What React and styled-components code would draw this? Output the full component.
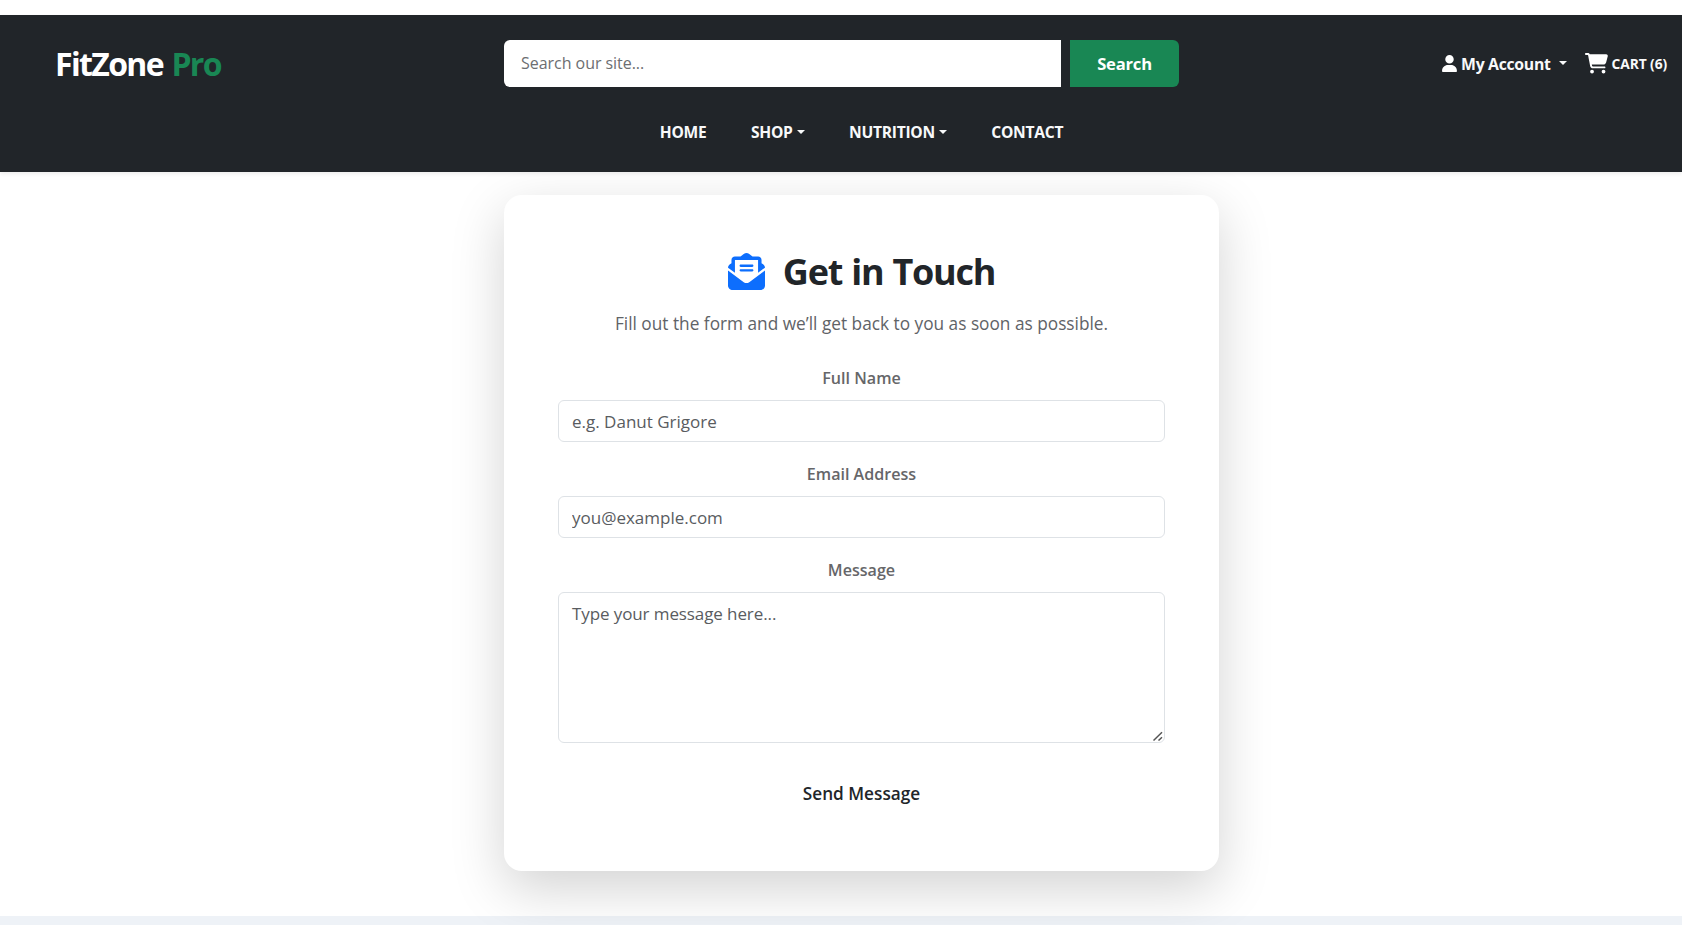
import React from "react";
import styled, { createGlobalStyle } from "styled-components";
import { FaUser, FaCartShopping, FaEnvelopeOpenText } from "react-icons/fa6";

const GlobalStyle = createGlobalStyle`
  *, *::before, *::after { box-sizing: border-box; }
  html { background: #eef2f7; overflow: hidden; }
  body {
    margin: 0;
    height: 925px;
    overflow: hidden;
    font-family: "Segoe UI", "Open Sans", "Noto Sans", sans-serif;
    font-size: 17px;
    color: #212529;
  }
`;

const Page = styled.div`
  display: flex;
  flex-direction: column;
  height: 916px;
  padding-top: 15px;
  background: #fff;
`;

const Header = styled.header`
  position: relative;
  z-index: 1;
  flex: none;
  height: 157px;
  padding-top: 25px;
  background: #212529;
  box-shadow: 0 2px 4px rgba(0, 0, 0, 0.075);
  color: #f8f9fa;
`;

const TopRow = styled.div`
  display: grid;
  grid-template-columns: 504px 675px 1fr;
  grid-template-rows: 47px;
  align-items: center;
`;

const Brand = styled.a`
  padding-left: 55px;
  font-size: 32px;
  line-height: 47px;
  font-weight: 700;
  letter-spacing: -1.65px;
  word-spacing: 1.8px;
  color: #fff;
`;

const BrandAccent = styled.span`
  color: #198754;
`;

const SearchForm = styled.form`
  display: flex;
  gap: 9px;
  height: 47px;
`;

const SearchInput = styled.input`
  flex: 1;
  min-width: 0;
  padding: 0 17px 1px;
  border: 0;
  border-radius: 6px 0 0 6px;
  background: #fff;
  font: inherit;
  font-size: 16px;
  letter-spacing: -0.04px;
  &::placeholder { color: #6c6e71; opacity: 1; }
`;

const SearchButton = styled.button`
  width: 109px;
  padding: 0;
  border: 0;
  border-radius: 0 6px 6px 0;
  background: #198754;
  color: #fff;
  font: inherit;
  font-size: 16.6px;
  font-weight: 700;
  letter-spacing: -0.2px;
`;

const Actions = styled.div`
  display: flex;
  align-items: center;
  justify-content: flex-end;
  gap: 18px;
  padding-right: 15px;
`;

const ActionLink = styled.a`
  display: flex;
  align-items: center;
  font-size: ${(p) => p.$size}px;
  font-weight: 700;
  letter-spacing: ${(p) => p.$spacing || 0}px;
  svg {
    width: ${(p) => p.$iconWidth}px;
    height: ${(p) => p.$iconHeight}px;
    margin-right: 4px;
    color: #fff;
  }
`;

const Caret = styled.span`
  width: 0;
  height: 0;
  margin-left: ${(p) => p.$gap}px;
  margin-bottom: 1px;
  border: 4px solid transparent;
  border-top-color: currentColor;
  border-bottom: 0;
`;

const Nav = styled.nav`
  display: flex;
  justify-content: center;
  gap: 44.5px;
  padding: 33px 0 0 41px;
`;

const NavLink = styled.a`
  display: flex;
  align-items: center;
  font-size: 15.6px;
  line-height: 24px;
  font-weight: 700;
  letter-spacing: -0.28px;
`;

const Main = styled.main`
  display: flex;
  justify-content: center;
  padding: 23px 0 0 41px;
`;

const Card = styled.section`
  display: flex;
  flex-direction: column;
  width: 715px;
  height: 676px;
  padding: 53px 54px;
  border-radius: 18px;
  background: #fff;
  box-shadow: 0 17.6px 52.8px rgba(0, 0, 0, 0.175);
  text-align: center;
`;

const Title = styled.h2`
  display: flex;
  align-items: center;
  justify-content: center;
  gap: 18px;
  margin: 0;
  font-size: 36px;
  line-height: 47px;
  font-weight: 700;
  letter-spacing: -1.25px;
  word-spacing: 1px;
  svg { width: 37px; height: 37px; color: #0d6efd; }
`;

const Intro = styled.p`
  margin: 16px 0 29px;
  font-size: 17.25px;
  line-height: 26px;
  color: #5f6367;
`;

const Field = styled.label`
  display: flex;
  flex-direction: column;
  gap: 10px;
  margin-bottom: ${(p) => p.$after || 20}px;
`;

const FieldName = styled.span`
  font-size: 16.1px;
  line-height: 24px;
  font-weight: 600;
  color: #666669;
`;

const Input = styled.input`
  display: block;
  width: 100%;
  height: 42px;
  padding: 0 13px;
  border: 1px solid #dee2e6;
  border-radius: 6px;
  background: #fff;
  font: inherit;
  &::placeholder { color: #595c5f; opacity: 1; }
`;

const TextArea = styled(Input)`
  height: 151px;
  padding: 8px 13px;
  line-height: 26px;
  letter-spacing: -0.1px;
  resize: none;
`;

const TextAreaFrame = styled.span`
  position: relative;
  display: block;
`;

const Grip = styled.svg`
  position: absolute;
  right: 2px;
  bottom: 2px;
  width: 10px;
  height: 10px;
  stroke: #555;
  stroke-width: 1.5;
`;

const SendButton = styled.button`
  height: 42px;
  border: 0;
  background: transparent;
  color: #212529;
  font: inherit;
  font-size: 17.2px;
  font-weight: 600;
`;

const links = [
  { label: "HOME" },
  { label: "SHOP", menu: true },
  { label: "NUTRITION", menu: true },
  { label: "CONTACT" },
];

export default function App() {
  return (
    <>
      <GlobalStyle />
      <Page>
        <Header>
          <TopRow>
            <Brand>FitZone <BrandAccent>Pro</BrandAccent></Brand>
            <SearchForm>
              <SearchInput placeholder="Search our site..." />
              <SearchButton type="button">Search</SearchButton>
            </SearchForm>
            <Actions>
              <ActionLink $size={15.8} $spacing={-0.3} $iconWidth={15} $iconHeight={17}>
                <FaUser />My Account<Caret $gap={8} />
              </ActionLink>
              <ActionLink $size={13.8} $spacing={-0.1} $iconWidth={23} $iconHeight={20.5}>
                <FaCartShopping />CART (6)
              </ActionLink>
            </Actions>
          </TopRow>
          <Nav>
            {links.map((l) => (
              <NavLink key={l.label}>{l.label}{l.menu && <Caret $gap={4} />}</NavLink>
            ))}
          </Nav>
        </Header>
        <Main>
          <Card>
            <Title><FaEnvelopeOpenText />Get in Touch</Title>
            <Intro>Fill out the form and we’ll get back to you as soon as possible.</Intro>
            <Field>
              <FieldName>Full Name</FieldName>
              <Input placeholder="e.g. Danut Grigore" />
            </Field>
            <Field>
              <FieldName>Email Address</FieldName>
              <Input type="email" placeholder="you@example.com" />
            </Field>
            <Field $after={29}>
              <FieldName>Message</FieldName>
              <TextAreaFrame>
                <TextArea as="textarea" placeholder="Type your message here..." />
                <Grip viewBox="0 0 10 10">
                  <path d="M0.5 9.5 L9 1.3 M5.5 9.5 L9 6.3" />
                </Grip>
              </TextAreaFrame>
            </Field>
            <SendButton type="button">Send Message</SendButton>
          </Card>
        </Main>
      </Page>
    </>
  );
}
